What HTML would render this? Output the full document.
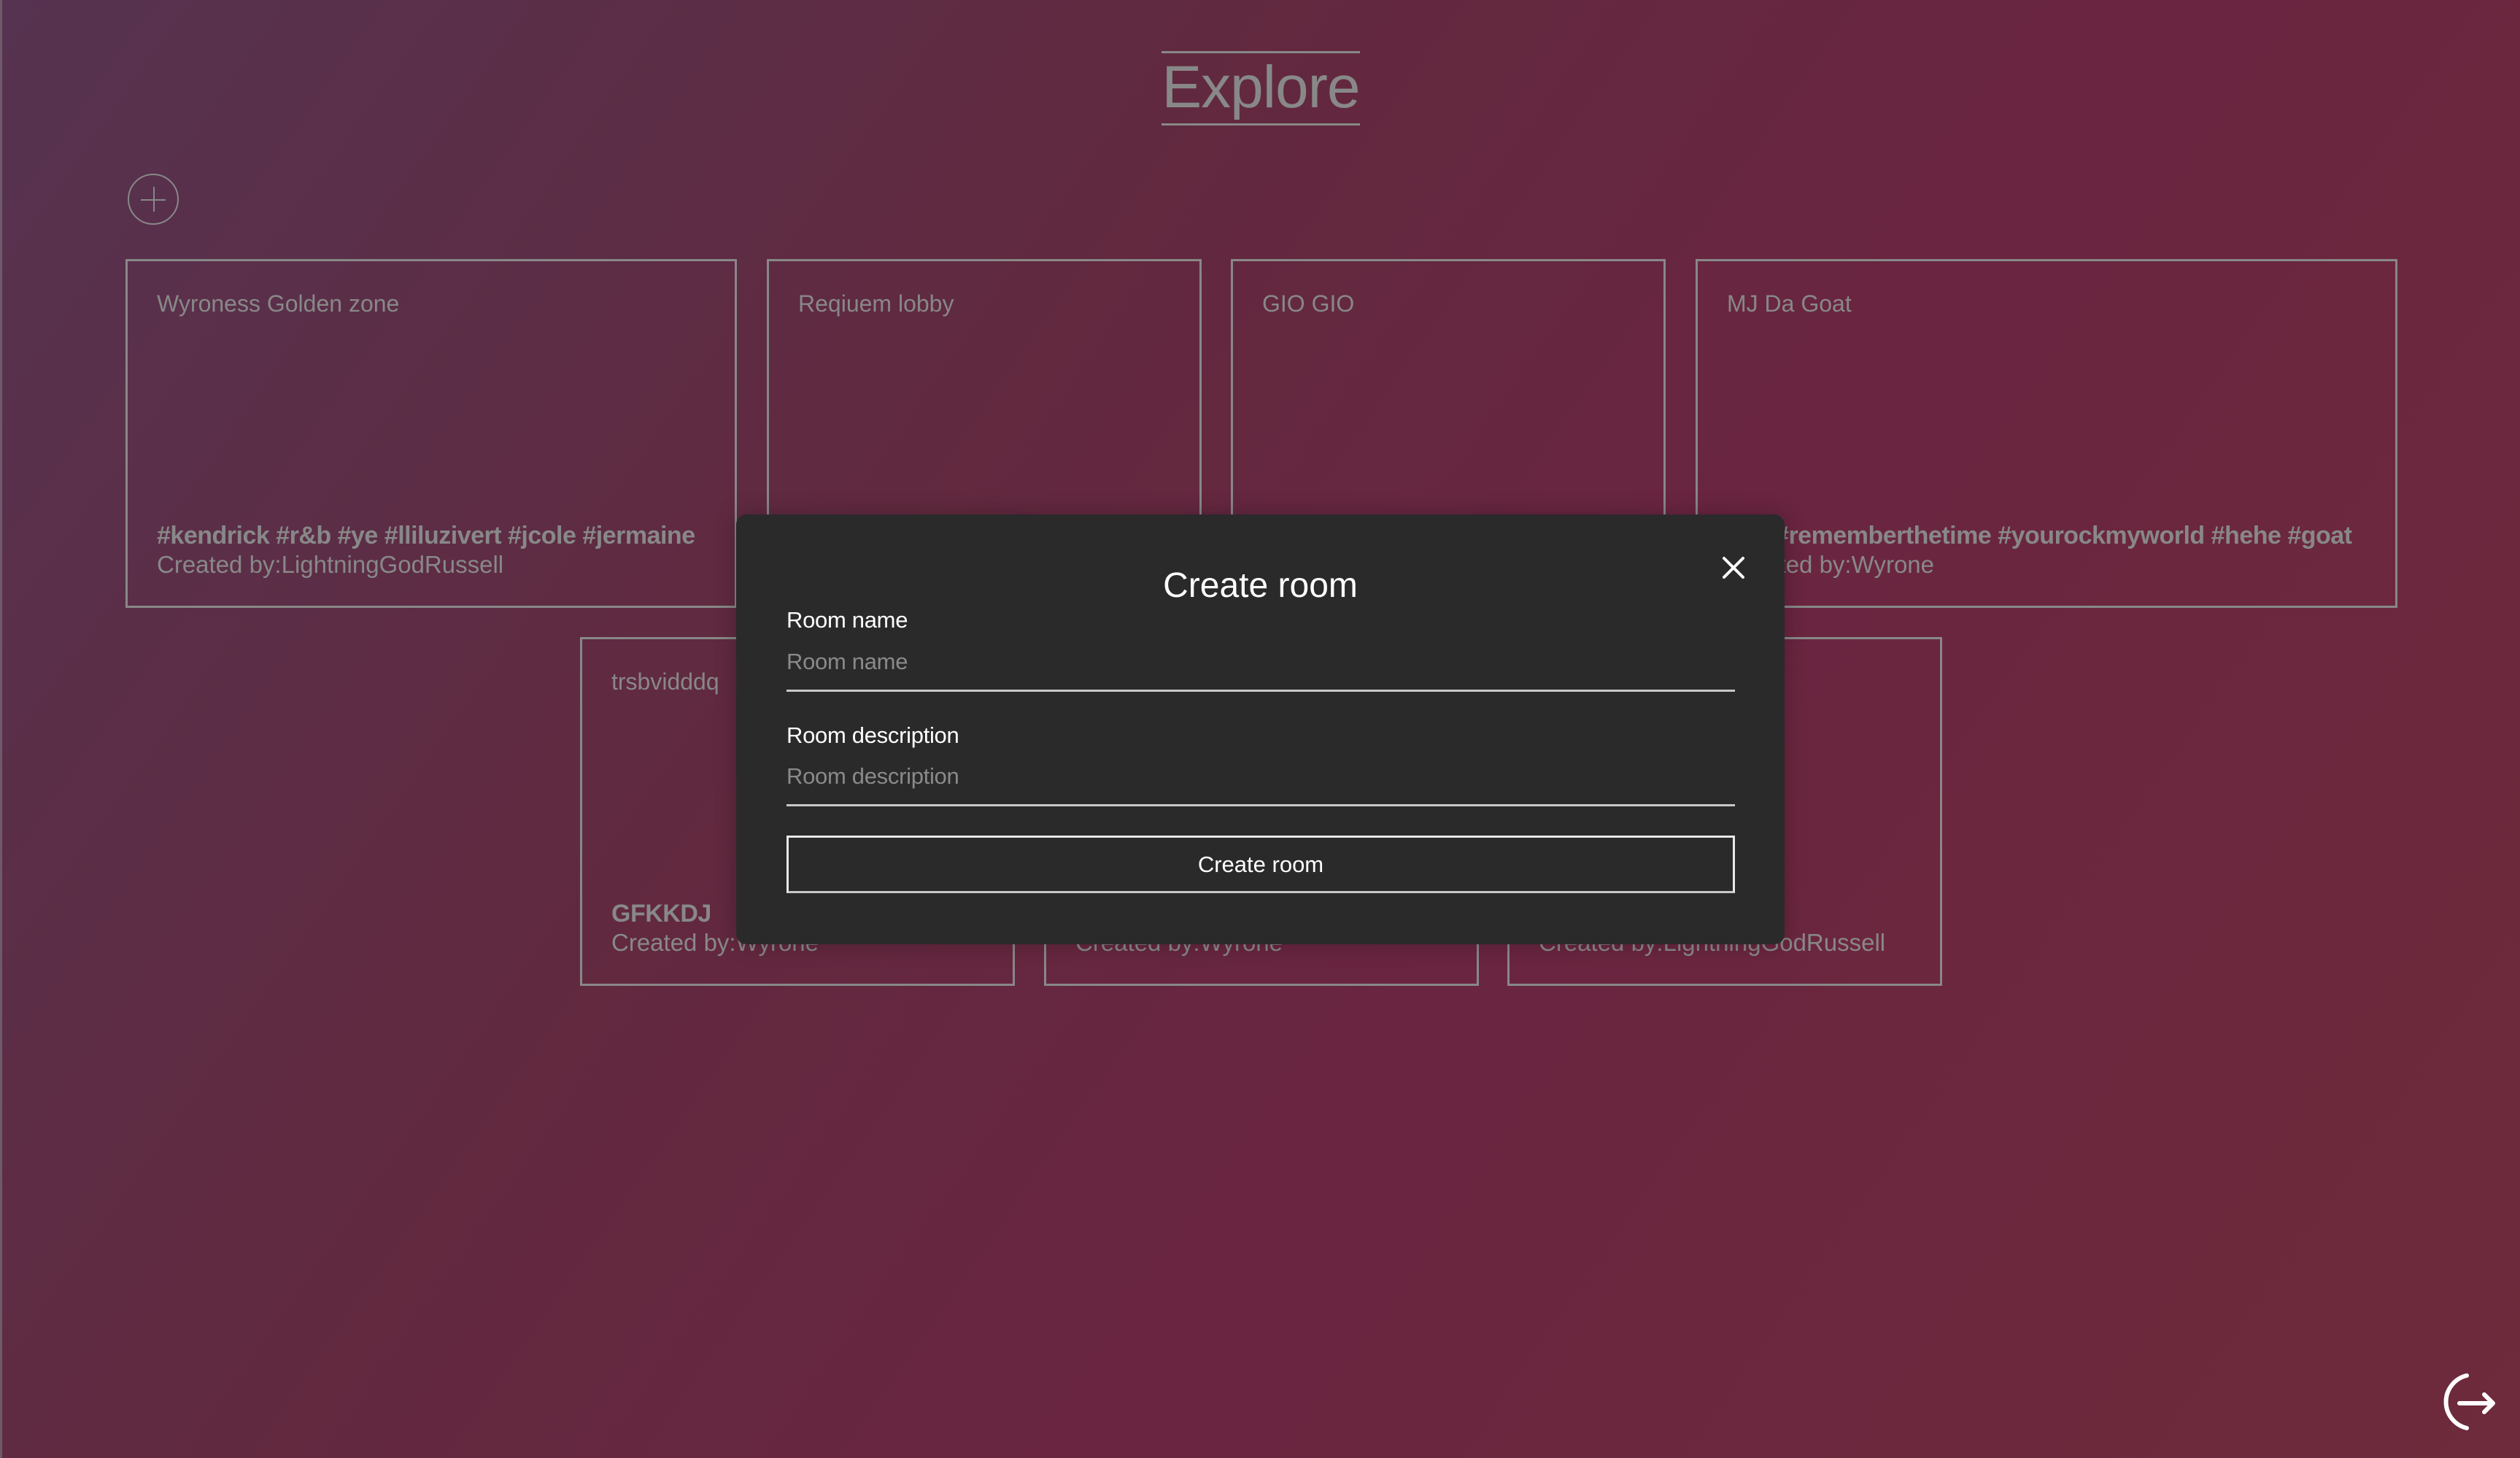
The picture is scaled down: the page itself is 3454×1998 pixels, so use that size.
<!DOCTYPE html>
<html><head><meta charset="utf-8"><style>
html,body{margin:0;padding:0}
body{width:3454px;height:1998px;overflow:hidden;position:relative;font-family:"Liberation Sans",sans-serif;
background:linear-gradient(125deg,#563350 0%,#61293f 35%,#6a2540 60%,#6d2b3b 100%);}
.edge{position:absolute;left:0;top:0;width:3px;height:1998px;background:#6e5a6a}
.t{position:absolute;left:1592px;top:70px;width:272px;height:96px;border-top:3px solid #888;border-bottom:3px solid #888;color:#888;font-size:82px;font-weight:300;text-align:center;line-height:94px;letter-spacing:-1px}
.plus{position:absolute;left:175px;top:238px;width:66px;height:66px;border:2px solid #888;border-radius:50%}
.plus:before{content:"";position:absolute;left:16px;top:33px;width:34px;height:2px;background:#888}
.plus:after{content:"";position:absolute;left:33px;top:16px;width:2px;height:34px;background:#888}
.card{position:absolute;border:3px solid #888;box-sizing:border-box;color:#888}
.card .n{position:absolute;left:40px;top:40px;font-size:32px;font-weight:300}
.card .h{position:absolute;left:40px;bottom:76px;font-size:34px;font-weight:bold;white-space:nowrap;letter-spacing:-0.5px}
.card .c{position:absolute;left:40px;bottom:37px;font-size:33px;white-space:nowrap}
.modal{position:absolute;left:1009px;top:705px;width:1437px;height:589px;background:#2a2a2a;border-radius:14px;color:#fff;box-shadow:0 0 30px rgba(0,0,0,.25)}
.modal .ti{position:absolute;left:0;width:100%;text-align:center;font-size:48px;font-weight:300}
.lab{position:absolute;left:69px;font-size:31px;font-weight:500;letter-spacing:-0.3px}
.ph{position:absolute;left:69px;font-size:31px;color:#8a8a8a;letter-spacing:-0.3px}
.ul{position:absolute;left:69px;width:1300px;height:3px;background:#c8c8c8}
.btn{position:absolute;left:69px;top:440px;width:1300px;height:79px;box-sizing:border-box;border:3px solid #e8e8e8;border-bottom-color:#c8c8c8;text-align:center;line-height:73px;font-size:31px}
</style></head><body>
<div class="edge"></div>
<div class="t">Explore</div>
<div class="plus"></div>

<div class="card" style="left:172px;top:355px;width:838px;height:478px"><div class="n">Wyroness Golden zone</div><div class="h">#kendrick #r&amp;b #ye #lliluzivert #jcole #jermaine</div><div class="c">Created by:LightningGodRussell</div></div>
<div class="card" style="left:1051px;top:355px;width:596px;height:478px"><div class="n">Reqiuem lobby</div><div class="h">#requiem</div><div class="c">Created by:Wyrone</div></div>
<div class="card" style="left:1687px;top:355px;width:596px;height:478px"><div class="n">GIO GIO</div><div class="h">#jojo</div><div class="c">Created by:Wyrone</div></div>
<div class="card" style="left:2324px;top:355px;width:962px;height:478px"><div class="n">MJ Da Goat</div><div class="h">#mj #rememberthetime #yourockmyworld #hehe #goat</div><div class="c">Created by:Wyrone</div></div>

<div class="card" style="left:795px;top:873px;width:596px;height:478px"><div class="n">trsbvidddq</div><div class="h">GFKKDJ</div><div class="c">Created by:Wyrone</div></div>
<div class="card" style="left:1431px;top:873px;width:596px;height:478px"><div class="n">room</div><div class="h">#tag</div><div class="c">Created by:Wyrone</div></div>
<div class="card" style="left:2066px;top:873px;width:596px;height:478px"><div class="n">room</div><div class="h">#tag</div><div class="c">Created by:LightningGodRussell</div></div>

<div class="modal">
  <div class="ti" style="top:70px">Create room</div>
  <svg style="position:absolute;left:1350px;top:56px" width="34" height="34" viewBox="0 0 34 34"><path d="M4 4L30 30M30 4L4 30" stroke="#fff" stroke-width="4" stroke-linecap="round"/></svg>
  <div class="lab" style="top:127px">Room name</div>
  <div class="ph" style="top:184px">Room name</div>
  <div class="ul" style="top:240px"></div>
  <div class="lab" style="top:285px">Room description</div>
  <div class="ph" style="top:341px">Room description</div>
  <div class="ul" style="top:397px"></div>
  <div class="btn">Create room</div>
</div>

<svg style="position:absolute;left:3335px;top:1875px" width="100" height="100" viewBox="0 0 100 100">
<path d="M46 10A37 37 0 0 0 46 82" fill="none" stroke="#fff" stroke-width="6" stroke-linecap="round"/>
<path d="M36 48H82M70 36L82 48L70 60" fill="none" stroke="#fff" stroke-width="6" stroke-linecap="round" stroke-linejoin="round"/>
</svg>
</body></html>
